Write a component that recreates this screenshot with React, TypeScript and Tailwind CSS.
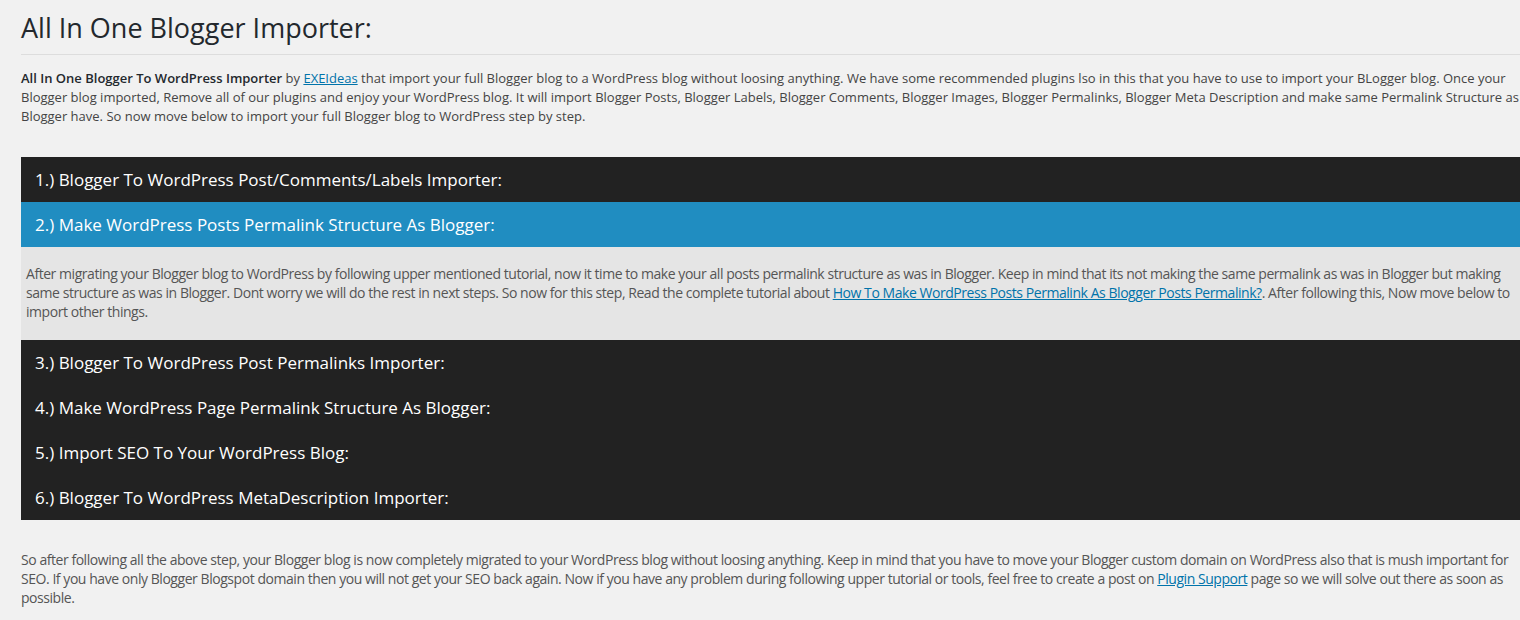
const STEPS = [
  { n: 1, title: 'Blogger To WordPress Post/Comments/Labels Importer:' },
  { n: 2, title: 'Make WordPress Posts Permalink Structure As Blogger:', open: true },
  { n: 3, title: 'Blogger To WordPress Post Permalinks Importer:' },
  { n: 4, title: 'Make WordPress Page Permalink Structure As Blogger:' },
  { n: 5, title: 'Import SEO To Your WordPress Blog:' },
  { n: 6, title: 'Blogger To WordPress MetaDescription Importer:' },
]

function Link({ children }: { children: React.ReactNode }) {
  return <a href="#" className="text-[#0073aa] underline">{children}</a>
}

function StepPanel() {
  return (
    <div className="bg-[#e5e5e5] pl-[5px] pr-[20px] pt-[17px] pb-[19px] text-[14px] leading-[19px] tracking-[-0.45px] text-[#555]">
      After migrating your Blogger blog to WordPress by following upper mentioned tutorial, now it time to make your all
      posts permalink structure as was in Blogger. Keep in mind that its not making the same permalink as was in Blogger but
      making same structure as was in Blogger. Dont worry we will do the rest in next steps. So now for this step, Read the
      complete tutorial about <Link>How To Make WordPress Posts Permalink As Blogger Posts Permalink?</Link>. After
      following this, Now move below to import other things.
    </div>
  )
}

export default function App() {
  return (
    <div className="min-h-[620px] w-[1520px] overflow-hidden bg-[#f1f1f1] font-['Open_Sans',sans-serif] text-[#444]">
      <div className="w-[1540px] pl-[21px]">
        <h2 className="border-b border-[#ddd] pt-[10px] pb-[9px] text-[27px] leading-[35px] font-normal text-[#23282d]">
          All In One Blogger Importer:
        </h2>

        <p className="mt-[14px] text-[13px] leading-[19px]">
          <b className="font-semibold text-[#23282d]">All In One Blogger To WordPress Importer</b> by <Link>EXEIdeas</Link> that
          import your full Blogger blog to a WordPress blog without loosing anything. We have some recommended plugins lso in
          this that you have to use to import your BLogger blog. Once your Blogger blog imported, Remove all of our plugins and
          enjoy your WordPress blog. It will import Blogger Posts, Blogger Labels, Blogger Comments, Blogger Images, Blogger
          Permalinks, Blogger Meta Description and make same Permalink Structure as Blogger have. So now move below to import
          your full Blogger blog to WordPress step by step.
        </p>

        <div className="mt-[31px]">
          {STEPS.map((s) => (
            <div key={s.n}>
              <div
                className={`flex h-[45px] items-center px-[14px] text-[17px] text-white ${s.open ? 'bg-[#208dc1]' : 'bg-[#222]'}`}
              >
                {s.n}.) {s.title}
              </div>
              {s.open && <StepPanel />}
            </div>
          ))}
        </div>

        <p className="mt-[30px] pr-[20px] pb-[20px] text-[14px] leading-[19px] tracking-[-0.45px] text-[#555]">
          So after following all the above step, your Blogger blog is now completely migrated to your WordPress blog without
          loosing anything. Keep in mind that you have to move your Blogger custom domain on WordPress also that is mush
          important for SEO. If you have only Blogger Blogspot domain then you will not get your SEO back again. Now if you have
          any problem during following upper tutorial or tools, feel free to create a post on <Link>Plugin Support</Link> page
          so we will solve out there as soon as possible.
        </p>
      </div>
    </div>
  )
}
